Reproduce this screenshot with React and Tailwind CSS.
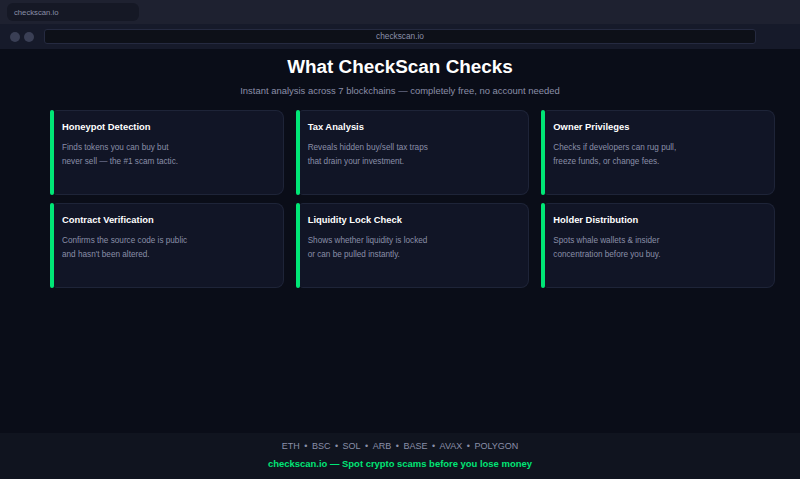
const checks = [
  { title: "Honeypot Detection", lines: ["Finds tokens you can buy but", "never sell — the #1 scam tactic."] },
  { title: "Tax Analysis", lines: ["Reveals hidden buy/sell tax traps", "that drain your investment."] },
  { title: "Owner Privileges", lines: ["Checks if developers can rug pull,", "freeze funds, or change fees."] },
  { title: "Contract Verification", lines: ["Confirms the source code is public", "and hasn't been altered."] },
  { title: "Liquidity Lock Check", lines: ["Shows whether liquidity is locked", "or can be pulled instantly."] },
  { title: "Holder Distribution", lines: ["Spots whale wallets & insider", "concentration before you buy."] },
];

const chains = ["ETH", "BSC", "SOL", "ARB", "BASE", "AVAX", "POLYGON"];

function CheckCard({ title, lines }) {
  return (
    <div className="flex h-[85px]">
      <div className="w-[4px] shrink-0 rounded-[2px] bg-[#00e676]" />
      <div className="flex-1 rounded-r-lg rounded-l-[3px] border border-l-0 border-[#1e2438] bg-[#111526] pl-2 pt-[9px]">
        <h3 className="text-[9.4px] leading-[14px] font-bold text-white">{title}</h3>
        <p className="mt-[7px] text-[8.2px] leading-[14px] text-[#8a8fa8]">
          {lines[0]}
          <br />
          {lines[1]}
        </p>
      </div>
    </div>
  );
}

export default function App() {
  return (
    <div className="flex h-[479px] w-[800px] flex-col overflow-hidden bg-[#0a0d18] font-['Liberation_Sans',Arial,sans-serif]">
      <div className="flex h-[24px] items-start bg-[#1e2130] pl-[7px] pt-[3px]">
        <div className="flex h-[18px] w-[132px] items-center rounded-md bg-[#151825] pl-[7px] pt-[1px] text-[7.7px] text-[#8a8fa8]">
          checkscan.io
        </div>
      </div>

      <div className="flex h-[25px] items-center bg-[#161a2a] pl-[10px] pr-[44px]">
        <span className="h-[10px] w-[10px] rounded-full bg-[#3a3f55]" />
        <span className="ml-1 h-[10px] w-[10px] rounded-full bg-[#3a3f55]" />
        <div className="ml-[10px] flex h-[15px] flex-1 items-center justify-center rounded-[3px] border border-[#252a40] bg-[#0d1018] text-[8.3px] text-[#8a8fa8]">
          checkscan.io
        </div>
      </div>

      <div className="flex-1">
        <h1 className="mt-[6px] text-center text-[18.9px] leading-[24px] font-bold text-white">
          What CheckScan Checks
        </h1>
        <p className="mt-[4px] text-center text-[9.45px] leading-[16px] text-[#8a8fa8]">
          Instant analysis across 7 blockchains — completely free, no account needed
        </p>
        <div className="mt-[11px] grid grid-cols-3 gap-x-3 gap-y-2 pl-[50px] pr-[25px]">
          {checks.map((c) => (
            <CheckCard key={c.title} title={c.title} lines={c.lines} />
          ))}
        </div>
      </div>

      <div className="flex h-[46px] flex-col items-center bg-[#10141f] pt-[6px]">
        <div className="flex gap-[4.5px] text-[9px] leading-[14px] text-[#8a8fa8]">
          {chains.map((c, i) => (
            <span key={c} className="flex gap-[4.5px]">
              {i > 0 && <span>•</span>}
              {c}
            </span>
          ))}
        </div>
        <div className="mt-1 text-[9.45px] leading-[14px] font-bold text-[#00e676]">
          checkscan.io — Spot crypto scams before you lose money
        </div>
      </div>
    </div>
  );
}
